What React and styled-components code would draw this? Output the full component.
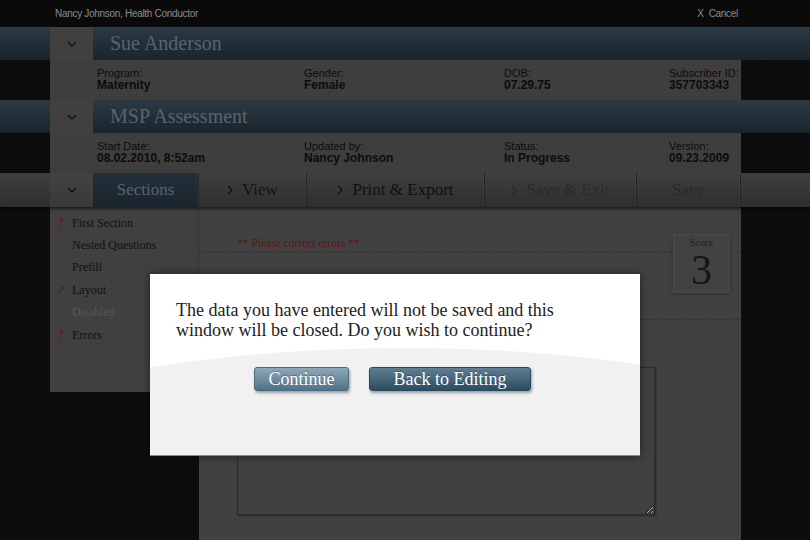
import React from 'react';
import styled, { createGlobalStyle } from 'styled-components';

const GlobalStyle = createGlobalStyle`
  html, body {
    margin: 0;
    padding: 0;
    background: #0d0d0d;
  }
  body {
    width: 810px;
    height: 540px;
    overflow: hidden;
    font-family: "Liberation Serif", "DejaVu Serif", serif;
  }
  * {
    box-sizing: border-box;
  }
`;

const Page = styled.div`
  position: relative;
  width: 810px;
  height: 540px;
  display: flex;
  flex-direction: column;
  background: #0d0d0d;
`;

const TopBar = styled.div`
  height: 27px;
  flex: none;
  display: flex;
  align-items: center;
  justify-content: space-between;
  padding: 0 72px 0 55px;
  background: #0a0a0a;
  font-family: "Liberation Sans", Arial, sans-serif;
  font-size: 10px;
  letter-spacing: -0.3px;
  color: #8b8b8b;
`;

const Band = styled.div`
  height: 33px;
  flex: none;
  display: flex;
  padding-left: 50px;
  background: linear-gradient(#2b3a45, #1a242b);
`;

const ChevronBox = styled.div`
  width: 43px;
  flex: none;
  display: flex;
  align-items: center;
  justify-content: center;
  background: ${(p) => (p.$bar ? 'linear-gradient(#424242, #393939)' : '#404040')};
`;

const BandTitle = styled.h2`
  margin: 0;
  padding-left: 17px;
  font-weight: normal;
  font-size: 20px;
  line-height: 33px;
  color: #58646d;
`;

const InfoStrip = styled.div`
  height: 40px;
  flex: none;
  display: flex;
  padding: 0 69px 0 50px;
  background: #0d0d0d;
`;

const InfoPanel = styled.div`
  flex: 1;
  display: grid;
  grid-template-columns: 207px 200px 165px auto;
  padding: 7px 0 0 47px;
  background: #3e3e3e;
  font-family: "Liberation Sans", Arial, sans-serif;
  color: #0c0c0c;
`;

const InfoLabel = styled.div`
  font-size: 11px;
  line-height: 12px;
  white-space: nowrap;
`;

const InfoValue = styled.div`
  font-size: 12px;
  line-height: 13px;
  font-weight: bold;
  white-space: nowrap;
`;

const Toolbar = styled.div`
  position: relative;
  z-index: 1;
  height: 34px;
  flex: none;
  display: flex;
  padding-left: 50px;
  background: linear-gradient(#3f3f3f, #2e2e2e);
  box-shadow: 0 2px 3px rgba(0, 0, 0, 0.55);
`;

const Tab = styled.div`
  width: ${(p) => p.$w}px;
  flex: none;
  display: flex;
  align-items: center;
  justify-content: center;
  gap: 9px;
  font-size: 17px;
  color: ${(p) => (p.$active ? '#56646e' : p.$disabled ? '#2a2a2a' : '#111')};
  background: ${(p) => (p.$active ? 'linear-gradient(#22303a, #1a242c)' : 'transparent')};
  border-right: 1px solid #262626;
  box-shadow: inset -1px 0 0 rgba(255, 255, 255, 0.03);
`;

const Body = styled.div`
  flex: 1;
  display: flex;
  padding: 0 69px 0 50px;
  background: #0d0d0d;
`;

const Sidebar = styled.ul`
  width: 149px;
  height: 185px;
  flex: none;
  margin: 0;
  padding: 5px 0 0;
  list-style: none;
  background: #404040;
  border-right: 1px solid #363636;
`;

const SideItem = styled.li`
  height: 22.4px;
  display: flex;
  align-items: center;
  font-size: 12px;
  color: ${(p) => (p.$disabled ? '#565656' : '#111')};
`;

const Mark = styled.span`
  width: 22px;
  padding-left: 1px;
  text-align: center;
  font-weight: bold;
  font-style: ${(p) => (p.$kind === 'error' ? 'italic' : 'normal')};
  font-size: ${(p) => (p.$kind === 'error' ? '15px' : '13px')};
  color: ${(p) => (p.$kind === 'error' ? '#7a1212' : '#26392e')};
`;

const Content = styled.div`
  position: relative;
  flex: 1;
  background: #414141;
`;

const Dotted = styled.div`
  background: linear-gradient(to right, #262626 1px, transparent 1px) left bottom / 3px 1px repeat-x;
`;

const QuestionHead = styled(Dotted)`
  height: 45px;
  display: flex;
  align-items: flex-end;
  padding: 0 0 2px 38px;
`;

const ErrorText = styled.span`
  font-size: 11.5px;
  line-height: 14px;
  color: #621313;
`;

const QuestionBody = styled(Dotted)`
  height: 68px;
`;

const ScoreBox = styled.div`
  position: absolute;
  top: 27px;
  right: 11px;
  width: 57px;
  height: 59px;
  padding-top: 2px;
  text-align: center;
  background: #424242;
  border: 1px solid #4a4a4a;
  box-shadow: 0 1px 3px rgba(0, 0, 0, 0.35);
  color: #151515;
`;

const ScoreLabel = styled.div`
  font-size: 10px;
  line-height: 11px;
  color: #1e1e1e;
`;

const ScoreValue = styled.div`
  font-size: 42px;
  line-height: 47px;
  margin-top: -1px;
`;

const Answer = styled.textarea`
  display: block;
  width: 418px;
  height: 148px;
  margin: 47px 0 0 38px;
  background: #404040;
  border: 1px solid #2b2b2b;
  box-shadow: 1px 1px 2px rgba(0, 0, 0, 0.4);
  resize: both;
  outline: none;
`;

const Modal = styled.div`
  position: absolute;
  left: 150px;
  top: 274px;
  width: 490px;
  height: 182px;
  overflow: hidden;
  background: #fff;
  border-bottom: 1px solid #8a8a8a;
  box-shadow: 0 0 8px rgba(0, 0, 0, 0.5);

  &::before {
    content: '';
    position: absolute;
    left: -245px;
    top: 74px;
    width: 1000px;
    height: 280px;
    border-radius: 50%;
    background: #f1f1f1;
  }
`;

const Message = styled.p`
  position: relative;
  margin: 0;
  padding: 26px 26px 0;
  font-size: 18px;
  line-height: 20px;
  color: #222;
`;

const Actions = styled.div`
  position: relative;
  display: flex;
  justify-content: center;
  gap: 20px;
  margin-top: 27px;
  padding-right: 5px;
`;

const Button = styled.button`
  width: ${(p) => p.$w}px;
  height: 24px;
  padding: 0;
  font-family: "Liberation Serif", "DejaVu Serif", serif;
  font-size: 18px;
  line-height: 22px;
  color: #fff;
  text-shadow: 0 -1px 0 rgba(0, 0, 0, 0.25);
  border-radius: 3px;
  border: 1px solid ${(p) => (p.$primary ? '#2a4a5d' : '#4a6b7e')};
  background: ${(p) =>
    p.$primary
      ? 'linear-gradient(#5e7f93, #2c4c60)'
      : 'linear-gradient(#8da8b8, #507286)'};
  box-shadow: 1px 2px 3px rgba(0, 0, 0, 0.35);
  cursor: pointer;
`;

const ChevronDown = () => (
  <svg width="10" height="6" viewBox="0 0 10 6">
    <path d="M1 1l4 4 4-4" stroke="#111" strokeWidth="1.4" fill="none" />
  </svg>
);

const ChevronRight = ({ color = '#111' }) => (
  <svg width="6" height="10" viewBox="0 0 6 10">
    <path d="M1 1l4 4-4 4" stroke={color} strokeWidth="1.4" fill="none" />
  </svg>
);

const records = [
  {
    title: 'Sue Anderson',
    fields: [
      ['Program:', 'Maternity'],
      ['Gender:', 'Female'],
      ['DOB:', '07.29.75'],
      ['Subscriber ID:', '357703343'],
    ],
  },
  {
    title: 'MSP Assessment',
    fields: [
      ['Start Date:', '08.02.2010, 8:52am'],
      ['Updated by:', 'Nancy Johnson'],
      ['Status:', 'In Progress'],
      ['Version:', '09.23.2009'],
    ],
  },
];

const sections = [
  { name: 'First Section', mark: 'error' },
  { name: 'Nested Questions' },
  { name: 'Prefill' },
  { name: 'Layout', mark: 'done' },
  { name: 'Disabled', disabled: true },
  { name: 'Errors', mark: 'error' },
];

const App = () => {
  return (
    <>
      <GlobalStyle />
      <Page>
        <TopBar>
          <span>Nancy Johnson, Health Conductor</span>
          <span>X&nbsp; Cancel</span>
        </TopBar>

        {records.map((r) => (
          <React.Fragment key={r.title}>
            <Band>
              <ChevronBox>
                <ChevronDown />
              </ChevronBox>
              <BandTitle>{r.title}</BandTitle>
            </Band>
            <InfoStrip>
              <InfoPanel>
                {r.fields.map(([label, value]) => (
                  <div key={label}>
                    <InfoLabel>{label}</InfoLabel>
                    <InfoValue>{value}</InfoValue>
                  </div>
                ))}
              </InfoPanel>
            </InfoStrip>
          </React.Fragment>
        ))}

        <Toolbar>
          <ChevronBox $bar>
            <ChevronDown />
          </ChevronBox>
          <Tab $w={106} $active>Sections</Tab>
          <Tab $w={108}>
            <ChevronRight />
            View
          </Tab>
          <Tab $w={178}>
            <ChevronRight />
            Print &amp; Export
          </Tab>
          <Tab $w={152} $disabled>
            <ChevronRight color="#2a2a2a" />
            Save &amp; Exit
          </Tab>
          <Tab $w={104} $disabled>Save</Tab>
        </Toolbar>

        <Body>
          <Sidebar>
            {sections.map((s) => (
              <SideItem key={s.name} $disabled={s.disabled}>
                <Mark $kind={s.mark}>{s.mark === 'error' ? '!' : s.mark === 'done' ? '✓' : ''}</Mark>
                {s.name}
              </SideItem>
            ))}
          </Sidebar>

          <Content>
            <QuestionHead>
              <ErrorText>** Please correct errors **</ErrorText>
            </QuestionHead>
            <QuestionBody />
            <ScoreBox>
              <ScoreLabel>Score</ScoreLabel>
              <ScoreValue>3</ScoreValue>
            </ScoreBox>
            <Answer readOnly />
          </Content>
        </Body>

        <Modal>
          <Message>
            The data you have entered will not be saved and this window will be closed. Do you wish to continue?
          </Message>
          <Actions>
            <Button $w={95}>Continue</Button>
            <Button $w={162} $primary>Back to Editing</Button>
          </Actions>
        </Modal>
      </Page>
    </>
  );
};

export default App;
